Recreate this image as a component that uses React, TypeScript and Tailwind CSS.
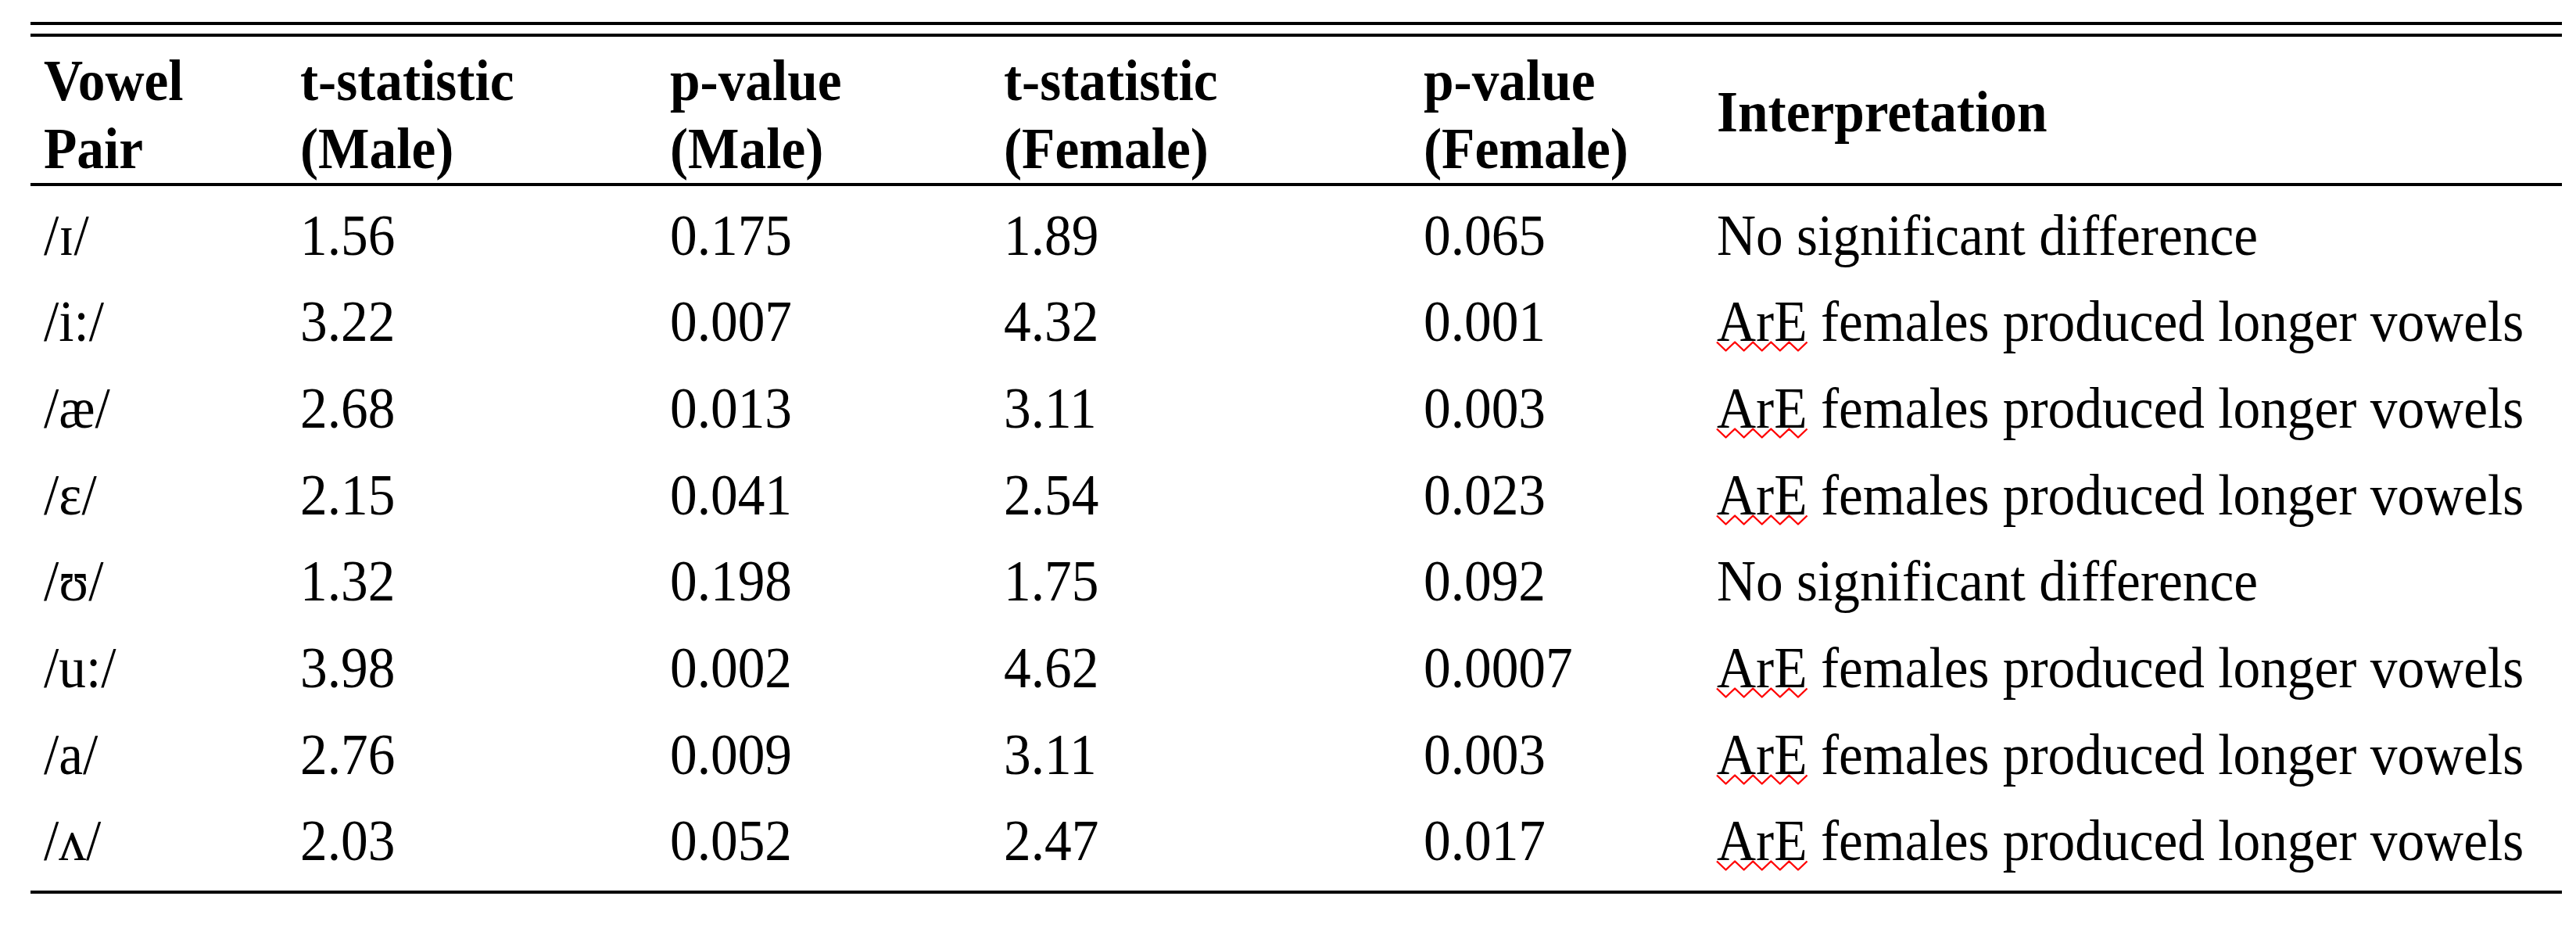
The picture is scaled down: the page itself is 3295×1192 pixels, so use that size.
import React from "react";

const COLS = "grid grid-cols-[328px_473px_427px_537px_375px_1098px]";

type Row = [string, string, string, string, string, string];

const rows: Row[] = [
  ["/ɪ/", "1.56", "0.175", "1.89", "0.065", "No significant difference"],
  ["/i:/", "3.22", "0.007", "4.32", "0.001", "ArE females produced longer vowels"],
  ["/æ/", "2.68", "0.013", "3.11", "0.003", "ArE females produced longer vowels"],
  ["/ɛ/", "2.15", "0.041", "2.54", "0.023", "ArE females produced longer vowels"],
  ["/ʊ/", "1.32", "0.198", "1.75", "0.092", "No significant difference"],
  ["/u:/", "3.98", "0.002", "4.62", "0.0007", "ArE females produced longer vowels"],
  ["/a/", "2.76", "0.009", "3.11", "0.003", "ArE females produced longer vowels"],
  ["/ʌ/", "2.03", "0.052", "2.47", "0.017", "ArE females produced longer vowels"],
];

function Squiggle() {
  const period = 23.2;
  let d = "M0 1.5";
  for (let i = 0; i < 5; i++) {
    const x = i * period;
    d += ` L${(x + period / 2).toFixed(2)} 12.5 L${(x + period).toFixed(2)} 1.5`;
  }
  return (
    <svg
      className="absolute left-0 top-[65px] w-full h-[15px] overflow-visible"
      viewBox="0 0 116 15"
      preserveAspectRatio="none"
    >
      <path d={d} fill="none" stroke="#ff0000" strokeWidth="2.4" strokeLinejoin="round" />
    </svg>
  );
}

function Interp({ text }: { text: string }) {
  if (text.startsWith("ArE")) {
    return (
      <>
        <span className="relative">
          ArE
          <Squiggle />
        </span>
        {text.slice(3)}
      </>
    );
  }
  return <>{text}</>;
}

function Cell({ children, pt = "" }: { children: React.ReactNode; pt?: string }) {
  return (
    <div className={`pl-[17px] whitespace-nowrap ${pt}`}>
      <span className="block origin-left scale-x-[0.95]">{children}</span>
    </div>
  );
}

export default function App() {
  return (
    <div className="w-[3295px] h-[1192px] bg-white text-black font-['Liberation_Serif','Times_New_Roman',serif] text-[73px]">
      <div className="pt-[28px] pl-[39px]">
        <div className="w-[3238px]">
          <div className="h-[4px] bg-black" />
          <div className="mt-[11px] h-[4px] bg-black" />

          <div className={`${COLS} h-[187px] font-bold leading-[87px]`}>
            <Cell pt="pt-[13px]">
              Vowel
              <br />
              Pair
            </Cell>
            <Cell pt="pt-[13px]">
              t-statistic
              <br />
              (Male)
            </Cell>
            <Cell pt="pt-[13px]">
              p-value
              <br />
              (Male)
            </Cell>
            <Cell pt="pt-[13px]">
              t-statistic
              <br />
              (Female)
            </Cell>
            <Cell pt="pt-[13px]">
              p-value
              <br />
              (Female)
            </Cell>
            <Cell pt="pt-[53px]">Interpretation</Cell>
          </div>

          <div className="h-[4px] bg-black" />

          <div className="py-[8px]">
            {rows.map((r, i) => (
              <div key={i} className={`${COLS} h-[110.625px] items-center leading-[87px]`}>
                <Cell>{r[0]}</Cell>
                <Cell>{r[1]}</Cell>
                <Cell>{r[2]}</Cell>
                <Cell>{r[3]}</Cell>
                <Cell>{r[4]}</Cell>
                <Cell>
                  <Interp text={r[5]} />
                </Cell>
              </div>
            ))}
          </div>

          <div className="h-[4px] bg-black" />
        </div>
      </div>
    </div>
  );
}
